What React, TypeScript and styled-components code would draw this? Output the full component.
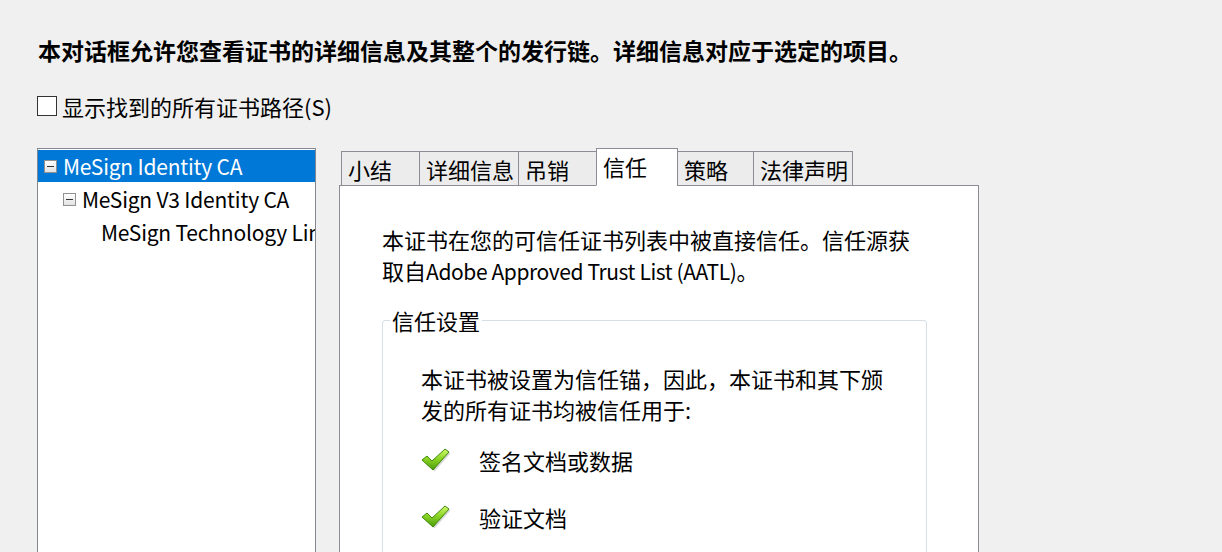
import styled, { createGlobalStyle } from "styled-components";

const Global = createGlobalStyle`
  html, body { margin: 0; padding: 0; background: #f0f0f0; }
  body {
    font-family: "Noto Sans CJK SC", "Noto Sans", sans-serif;
    color: #000;
    overflow: hidden;
  }
`;

const Page = styled.div`
  width: 1222px;
  height: 552px;
  padding: 35px 0 0 37px;
  box-sizing: border-box;
  overflow: hidden;
`;

const Heading = styled.div`
  font-size: 23px;
  font-weight: 700;
  line-height: 30px;
  margin-left: 1px;
  white-space: nowrap;
`;

const CheckRow = styled.label`
  display: flex;
  align-items: center;
  gap: 5px;
  margin-top: 26px;
  font-size: 22px;
  line-height: 30px;
`;

const Box = styled.span`
  width: 18px;
  height: 18px;
  border: 1px solid #333;
  background: #fff;
  flex: none;
`;

const Latin = styled.span`
  font-size: 21px;
  letter-spacing: -0.4px;
`;

const Body = styled.div`
  display: flex;
  align-items: flex-start;
  gap: 23px;
  margin-top: 27px;
`;

const Tree = styled.div`
  width: 277px;
  height: 420px;
  border: 1px solid #828790;
  background: #fff;
  padding-top: 1px;
  flex: none;
  overflow: hidden;
`;

const Node = styled.div<{ $level: number; $selected?: boolean }>`
  display: flex;
  align-items: center;
  height: 32px;
  padding-left: ${(p) => 6 + p.$level * 19}px;
  font-size: 21px;
  letter-spacing: -0.2px;
  white-space: nowrap;
  background: ${(p) => (p.$selected ? "#0078d7" : "transparent")};
  color: ${(p) => (p.$selected ? "#fff" : "#000")};
  margin-bottom: 1px;
`;

const Expander = styled.span`
  width: 11px;
  height: 11px;
  border: 1px solid #919191;
  background: linear-gradient(#fff, #e3e3e3);
  margin-right: 6px;
  position: relative;
  flex: none;
  &::after {
    content: "";
    position: absolute;
    left: 2px;
    right: 2px;
    top: 5px;
    height: 1px;
    background: #333;
  }
`;

const Spacer = styled.span`
  width: 19px;
  flex: none;
`;

const TabsArea = styled.div`
  display: flex;
  flex-direction: column;
  width: 640px;
`;

const TabStrip = styled.div`
  display: flex;
  align-items: flex-end;
  padding-left: 2px;
  height: 38px;
  position: relative;
  z-index: 1;
  margin-bottom: -1px;
`;

const Tab = styled.div<{ $active?: boolean; $w: number }>`
  box-sizing: border-box;
  width: ${(p) => p.$w}px;
  height: ${(p) => (p.$active ? 38 : 35)}px;
  margin-left: -1px;
  border: 1px solid #8c8c94;
  border-bottom: ${(p) => (p.$active ? "1px solid #fff" : "1px solid #8c8c94")};
  background: ${(p) => (p.$active ? "#fff" : "#ececec")};
  font-size: 22px;
  line-height: 34px;
  padding-left: 6px;
  white-space: nowrap;
  &:first-child { margin-left: 0; }
`;

const Panel = styled.div`
  box-sizing: border-box;
  height: 380px;
  border: 1px solid #8c8c94;
  border-bottom: none;
  background: #fff;
  padding: 38px 51px 0 42px;
`;

const Para = styled.div`
  font-size: 22px;
  line-height: 31px;
  white-space: nowrap;
`;

const Group = styled.fieldset`
  margin: 20px 0 0;
  padding: 0;
  border: 1px solid #d5dfe5;
  border-radius: 3px;
  height: 300px;
  box-sizing: border-box;
`;

const Legend = styled.legend`
  font-size: 22px;
  line-height: 26px;
  padding: 0 2px;
  margin-left: 7px;
`;

const GroupBody = styled.div`
  padding: 30px 0 0 38px;
`;

const Usages = styled.div`
  margin-top: 6px;
`;

const Usage = styled.div`
  display: flex;
  align-items: center;
  gap: 28px;
  font-size: 22px;
  height: 57px;
`;

function Check() {
  return (
    <svg width="30" height="24" viewBox="0 0 30 24">
      <defs>
        <linearGradient id="ck" x1="0" y1="0" x2="0" y2="1">
          <stop offset="0" stopColor="#d2f870" />
          <stop offset="0.45" stopColor="#8ed626" />
          <stop offset="1" stopColor="#4a9a0c" />
        </linearGradient>
      </defs>
      <path
        d="M1 12 L6 8 L11 13 L24 1 L28 4 L12 22 Z"
        fill="#808080"
        opacity="0.3"
        transform="translate(1.5 1.5)"
      />
      <path
        d="M1 12 L6 8 L11 13 L24 1 L28 4 L12 22 Z"
        fill="url(#ck)"
        stroke="#3d8a08"
        strokeWidth="1"
        strokeLinejoin="round"
      />
    </svg>
  );
}

export default function App() {
  return (
    <Page>
      <Global />
      <Heading>
        本对话框允许您查看证书的详细信息及其整个的发行链。详细信息对应于选定的项目。
      </Heading>
      <CheckRow>
        <Box />
        显示找到的所有证书路径(S)
      </CheckRow>
      <Body>
        <Tree>
          <Node $level={0} $selected>
            <Expander />
            MeSign Identity CA
          </Node>
          <Node $level={1}>
            <Expander />
            MeSign V3 Identity CA
          </Node>
          <Node $level={2}>
            <Spacer />
            MeSign Technology Limited
          </Node>
        </Tree>
        <TabsArea>
          <TabStrip>
            <Tab $w={79}>小结</Tab>
            <Tab $w={100}>详细信息</Tab>
            <Tab $w={79}>吊销</Tab>
            <Tab $w={82} $active>信任</Tab>
            <Tab $w={77}>策略</Tab>
            <Tab $w={100}>法律声明</Tab>
          </TabStrip>
          <Panel>
            <Para>
              本证书在您的可信任证书列表中被直接信任。信任源获
              <br />
              取自<Latin>Adobe Approved Trust List (AATL)</Latin>。
            </Para>
            <Group>
              <Legend>信任设置</Legend>
              <GroupBody>
                <Para>
                  本证书被设置为信任锚，因此，本证书和其下颁
                  <br />
                  发的所有证书均被信任用于:
                </Para>
                <Usages>
                  <Usage>
                    <Check />
                    签名文档或数据
                  </Usage>
                  <Usage>
                    <Check />
                    验证文档
                  </Usage>
                </Usages>
              </GroupBody>
            </Group>
          </Panel>
        </TabsArea>
      </Body>
    </Page>
  );
}
